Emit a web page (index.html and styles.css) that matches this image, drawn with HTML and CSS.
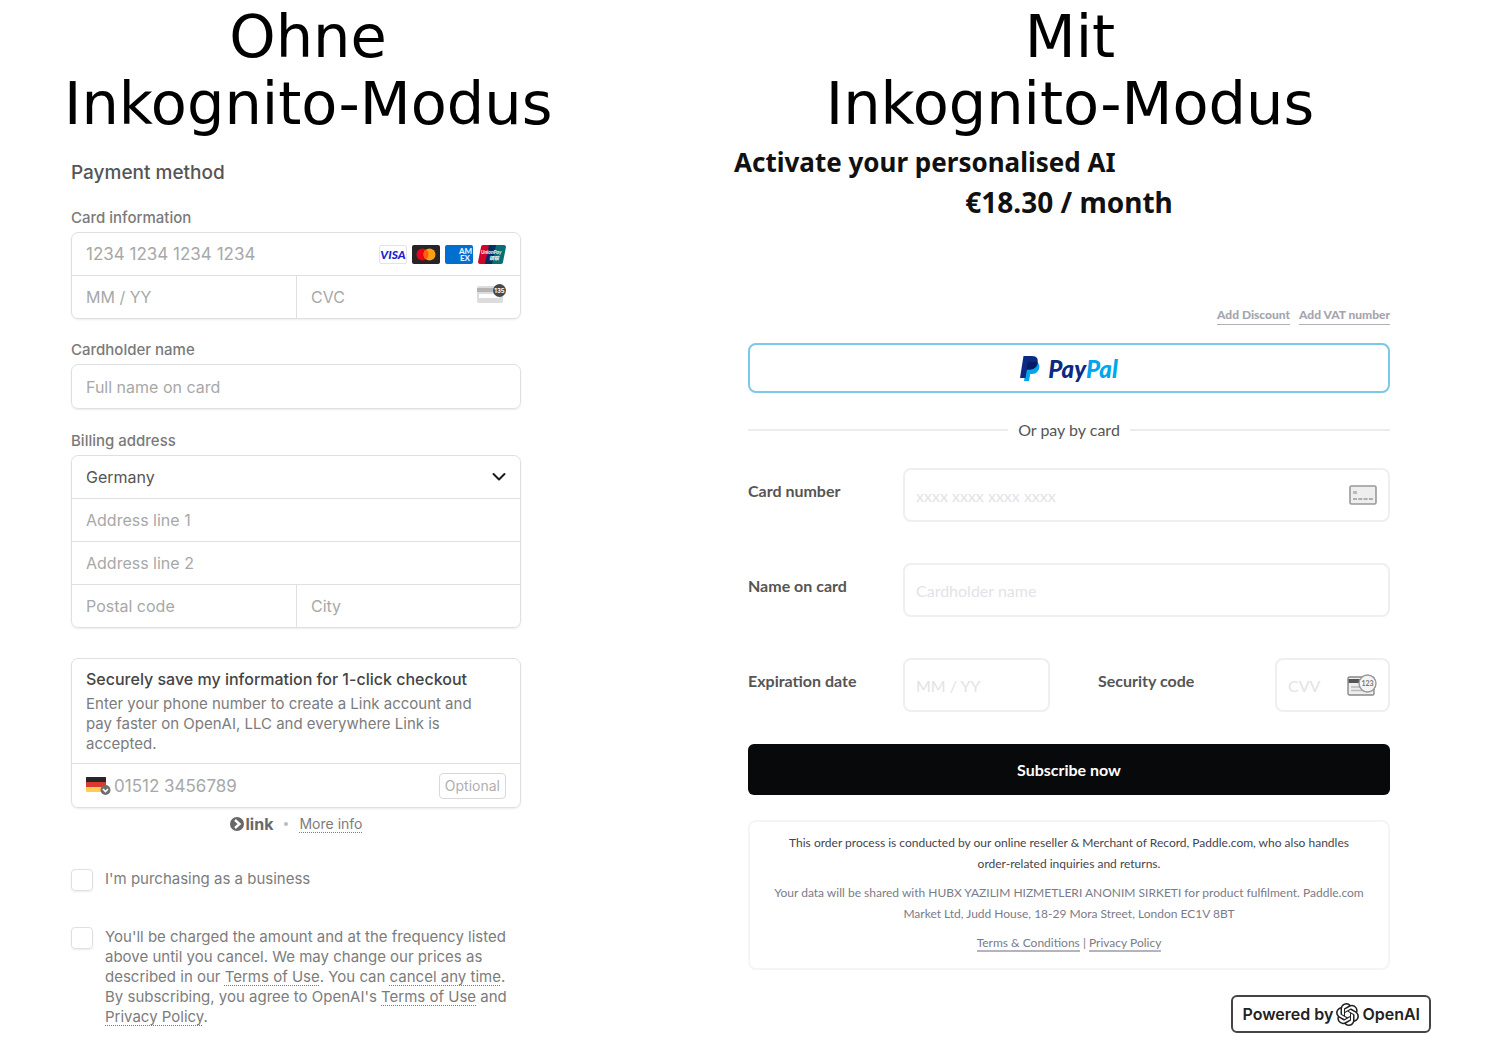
FILE: index.html
```html
<!DOCTYPE html>
<html lang="de">
<head>
    <meta charset="UTF-8">
    <meta name="viewport" content="width=device-width, initial-scale=1.0">
    <title>Ohne / Mit Inkognito-Modus</title>
    <link rel="stylesheet" href="styles.css">
</head>

<body>
    <main class="page">
        <section class="column">
            <h1>Ohne<br>Inkognito-Modus</h1>
            <form class="stripe" lang="en">
                <h2>Payment method</h2>

                <label class="field-label" for="card-number">Card information</label>
                <div class="group">
                    <div class="row">
                        <input type="text" class="number" id="card-number" placeholder="1234 1234 1234 1234">
                        <div class="brands">
                            <svg width="28" height="19" viewBox="0 0 28 19">
                                <rect x="0.5" y="0.5" width="27" height="18" rx="1.5" fill="#fff" stroke="#e4e4e8"/>
                                <text x="14" y="13.5" text-anchor="middle" class="visa">VISA</text>
                            </svg>
                            <svg width="28" height="19" viewBox="0 0 28 19">
                                <rect width="28" height="19" rx="2" fill="#252525"/>
                                <circle cx="10.5" cy="9.5" r="6" fill="#eb001b"/>
                                <circle cx="17.5" cy="9.5" r="6" fill="#f79e1b"/>
                                <path d="M14 4.6a6 6 0 0 1 0 9.8a6 6 0 0 1 0-9.8z" fill="#ff5f00"/>
                            </svg>
                            <svg width="28" height="19" viewBox="0 0 28 19">
                                <rect width="28" height="19" rx="2" fill="#016fd0"/>
                                <text x="14" y="9" class="amex">AM</text>
                                <text x="15" y="16" class="amex">EX</text>
                            </svg>
                            <svg width="28" height="19" viewBox="0 0 28 19">
                                <path d="M5 0h8L9 19H2a2 2 0 0 1-2-2L3 2a2 2 0 0 1 2-2z" fill="#d10429"/>
                                <path d="M11 0h9l-4 19H7z" fill="#022e64"/>
                                <path d="M18 0h8a2 2 0 0 1 2 2l-3 15a2 2 0 0 1-2 2h-9z" fill="#076f74"/>
                                <text x="3" y="9" class="union">UnionPay</text>
                                <text x="11" y="15" class="union">银联</text>
                            </svg>
                        </div>
                    </div>
                    <div class="row split">
                        <input type="text" aria-label="Expiry" placeholder="MM / YY">
                        <div class="cell">
                            <input type="text" aria-label="CVC" placeholder="CVC">
                            <svg class="cvc" width="30" height="22" viewBox="0 0 30 22">
                                <rect x="1" y="3" width="26" height="17" rx="2" fill="#dcdcdc"/>
                                <rect x="1" y="5" width="26" height="4" fill="#b4b4b4"/>
                                <rect x="3" y="11" width="20" height="4" fill="#fff"/>
                                <circle cx="23.5" cy="7.5" r="6.5" fill="#484848"/>
                                <text x="23.5" y="10" text-anchor="middle" class="digits">135</text>
                            </svg>
                        </div>
                    </div>
                </div>

                <label class="field-label" for="cardholder">Cardholder name</label>
                <div class="group single">
                    <div class="row">
                        <input type="text" id="cardholder" placeholder="Full name on card">
                    </div>
                </div>

                <label class="field-label" for="country">Billing address</label>
                <div class="group">
                    <div class="row">
                        <select id="country">
                            <option>Germany</option>
                        </select>
                        <svg width="14" height="10" viewBox="0 0 14 10">
                            <path d="M1.5 2l5.5 5.5L12.5 2" fill="none" stroke="#1a1a1a" stroke-width="2" stroke-linecap="round" stroke-linejoin="round"/>
                        </svg>
                    </div>
                    <div class="row">
                        <input type="text" aria-label="Address line 1" placeholder="Address line 1">
                    </div>
                    <div class="row">
                        <input type="text" aria-label="Address line 2" placeholder="Address line 2">
                    </div>
                    <div class="row split">
                        <input type="text" aria-label="Postal code" placeholder="Postal code">
                        <div class="cell">
                            <input type="text" aria-label="City" placeholder="City">
                        </div>
                    </div>
                </div>

                <div class="group link-box">
                    <div class="link-text">
                        <h3>Securely save my information for 1-click checkout</h3>
                        <p>Enter your phone number to create a Link account and pay faster on OpenAI, LLC and everywhere Link is accepted.</p>
                    </div>
                    <div class="row phone">
                        <svg width="25" height="19" viewBox="0 0 25 19">
                            <rect x="0" y="1" width="20" height="15" rx="1" fill="#fc5"/>
                            <rect x="0" y="1" width="20" height="10" fill="#d9392f"/>
                            <path d="M1 1h18a1 1 0 0 1 1 1v4H0V2a1 1 0 0 1 1-1z" fill="#262626"/>
                            <circle cx="19.5" cy="14" r="5" fill="#6f6f6f"/>
                            <path d="M17 13l2.5 2.5L22 13" fill="none" stroke="#fff" stroke-width="1.6"/>
                        </svg>
                        <input type="tel" class="number" aria-label="Phone number" placeholder="01512 3456789">
                        <span class="optional">Optional</span>
                    </div>
                </div>
                <div class="link-info">
                    <svg width="14" height="14" viewBox="0 0 14 14">
                        <circle cx="7" cy="7" r="7" fill="#686868"/>
                        <path d="M5 3l4.5 4L5 11" fill="none" stroke="#fff" stroke-width="2.4"/>
                    </svg>
                    <strong>link</strong>
                    <span class="dot"></span>
                    <a href="#">More info</a>
                </div>

                <div class="check">
                    <input type="checkbox" id="business">
                    <label for="business">I'm purchasing as a business</label>
                </div>
                <div class="check">
                    <input type="checkbox" id="agree">
                    <label for="agree">You'll be charged the amount and at the frequency listed above until you cancel. We may change our prices as described in our <a href="#">Terms of Use</a>. You can <a href="#">cancel any time</a>. By subscribing, you agree to OpenAI's <a href="#">Terms of Use</a> and <a href="#">Privacy Policy</a>.</label>
                </div>
            </form>
        </section>

        <section class="column right">
            <h1>Mit<br>Inkognito-Modus</h1>
            <div class="offer" lang="en">
                <h2>Activate your personalised AI</h2>
                <p>€18.30 / month</p>
            </div>
            <form class="paddle" lang="en">
                <div class="extras">
                    <a href="#">Add Discount</a>
                    <a href="#">Add VAT number</a>
                </div>
                <button type="button" class="paypal">
                    <svg width="20" height="25" viewBox="0 0 20 25">
                        <path d="M7 6h10c2.5 2 3 4.5 1.8 7.5c-1.3 3.2-3.8 4.5-7 4.5h-1.6L9 25H4z" fill="#00a6ee"/>
                        <path d="M3.5 0H12c5 0 6.5 3 5.5 7c-1.1 4.7-4.3 6.5-8.5 6.5H7L5.5 22H0z" fill="#0a2a84"/>
                        <path d="M8 6h9.6c.2 4.5-3 7.5-8.6 7.5H6.8z" fill="#071c62"/>
                    </svg>
                    <span><b>Pay</b><i>Pal</i></span>
                </button>
                <div class="divider">Or pay by card</div>

                <div class="line">
                    <label for="p-number">Card number</label>
                    <div class="box">
                        <input type="text" id="p-number" placeholder="xxxx xxxx xxxx xxxx">
                        <svg width="28" height="20" viewBox="0 0 28 20">
                            <rect x="1" y="1" width="26" height="18" rx="1.5" fill="#eee" stroke="#999" stroke-width="1.6"/>
                            <rect x="4" y="6" width="4" height="3" fill="#bbb"/>
                            <path d="M4 14h20" stroke="#999" stroke-width="1.6" stroke-dasharray="4 1.3"/>
                        </svg>
                    </div>
                </div>
                <div class="line">
                    <label for="p-name">Name on card</label>
                    <div class="box">
                        <input type="text" id="p-name" placeholder="Cardholder name">
                    </div>
                </div>
                <div class="line">
                    <label for="p-date">Expiration date</label>
                    <div class="box date">
                        <input type="text" id="p-date" placeholder="MM / YY">
                    </div>
                    <label class="code-label" for="p-code">Security code</label>
                    <div class="box code">
                        <input type="text" id="p-code" placeholder="CVV">
                        <svg width="30" height="24" viewBox="0 0 30 24">
                            <rect x="1" y="4" width="26" height="18" rx="1.5" fill="#eee" stroke="#888" stroke-width="1.4"/>
                            <rect x="1.5" y="6" width="25" height="4" fill="#555"/>
                            <path d="M4 14h12M4 17.5h20" stroke="#bbb" stroke-width="1.4"/>
                            <circle cx="20.5" cy="10.5" r="8.5" fill="#f4f4f4" stroke="#999" stroke-width="1.4"/>
                            <text x="20.5" y="13" text-anchor="middle" class="cvv-digits">123</text>
                        </svg>
                    </div>
                </div>

                <button type="submit" class="subscribe">Subscribe now</button>

                <div class="legal">
                    <p class="dark">This order process is conducted by our online reseller &amp; Merchant of Record, Paddle.com, who also handles order-related inquiries and returns.</p>
                    <p>Your data will be shared with HUBX YAZILIM HIZMETLERI ANONIM SIRKETI for product fulfilment. Paddle.com Market Ltd, Judd House, 18-29 Mora Street, London EC1V 8BT</p>
                    <p><a href="#">Terms &amp; Conditions</a> | <a href="#">Privacy Policy</a></p>
                </div>
            </form>
            <div class="powered" lang="en">
                Powered by
                <svg width="23" height="23" viewBox="0 0 24 24" fill="#222">
                    <path d="M22.2819 9.8211a5.9847 5.9847 0 0 0-.5157-4.9108 6.0462 6.0462 0 0 0-6.5098-2.9A6.0651 6.0651 0 0 0 4.9807 4.1818a5.9847 5.9847 0 0 0-3.9977 2.9 6.0462 6.0462 0 0 0 .7427 7.0966 5.98 5.98 0 0 0 .511 4.9107 6.051 6.051 0 0 0 6.5146 2.9001A5.9847 5.9847 0 0 0 13.2599 24a6.0557 6.0557 0 0 0 5.7718-4.2058 5.9894 5.9894 0 0 0 3.9977-2.9001 6.0557 6.0557 0 0 0-.7475-7.0729zm-9.022 12.6081a4.4755 4.4755 0 0 1-2.8764-1.0408l.1419-.0804 4.7783-2.7582a.7948.7948 0 0 0 .3927-.6813v-6.7369l2.02 1.1686a.071.071 0 0 1 .038.052v5.5826a4.504 4.504 0 0 1-4.4945 4.4944zm-9.6607-4.1254a4.4708 4.4708 0 0 1-.5346-3.0137l.142.0852 4.783 2.7582a.7712.7712 0 0 0 .7806 0l5.8428-3.3685v2.3324a.0804.0804 0 0 1-.0332.0615L9.74 19.9502a4.4992 4.4992 0 0 1-6.1408-1.6464zM2.3408 7.8956a4.485 4.485 0 0 1 2.3655-1.9728V11.6a.7664.7664 0 0 0 .3879.6765l5.8144 3.3543-2.0201 1.1685a.0757.0757 0 0 1-.071 0l-4.8303-2.7865A4.504 4.504 0 0 1 2.3408 7.872zm16.5963 3.8558L13.1038 8.364 15.1192 7.2a.0757.0757 0 0 1 .071 0l4.8303 2.7913a4.4944 4.4944 0 0 1-.6765 8.1042v-5.6772a.79.79 0 0 0-.407-.667zm2.0107-3.0231l-.142-.0852-4.7735-2.7818a.7759.7759 0 0 0-.7854 0L9.409 9.2297V6.8974a.0662.0662 0 0 1 .0284-.0615l4.8303-2.7866a4.4992 4.4992 0 0 1 6.6802 4.66zM8.3065 12.863l-2.02-1.1638a.0804.0804 0 0 1-.038-.0567V6.0742a4.4992 4.4992 0 0 1 7.3757-3.4537l-.142.0805L8.704 5.459a.7948.7948 0 0 0-.3927.6813zm1.0976-2.3654l2.602-1.4998 2.6069 1.4998v2.9994l-2.5974 1.4997-2.6067-1.4997Z"/>
                </svg>
                OpenAI
            </div>
        </section>
    </main>
</body>
</html>
```
FILE: styles.css
```css
* {
    box-sizing: border-box;
}

body {
    margin: 0;
    background-color: white;
    font-family: Inter, "Liberation Sans", sans-serif;
}

h1, h2, h3, p {
    margin: 0;
}

input, select, button {
    font-family: inherit;
}

svg {
    flex: none;
}

.page {
    display: grid;
    grid-template-columns: 488fr 697fr;
    gap: 182px;
    padding: 3px 66px 0 64px;
}

.column {
    min-width: 0;
}

.right {
    display: flex;
    flex-direction: column;
}

h1 {
    font-family: "DejaVu Sans", sans-serif;
    font-size: 59px;
    font-weight: 400;
    line-height: 67px;
    text-align: center;
    white-space: nowrap;
    color: black;
}

.right h1 {
    margin-right: 25px;
}

/* left form */
.stripe {
    padding: 24px 31px 0 7px;
    font-size: 15px;
    line-height: 20px;
    color: #7c7c7c;
}

.stripe h2 {
    font-size: 19px;
    font-weight: 500;
    line-height: 24px;
    color: #555;
    margin-bottom: 23px;
}

.field-label {
    display: block;
    margin-bottom: 4px;
    font-weight: 500;
    color: #7a7a7a;
}

.group {
    border: 1px solid #e0e0e0;
    border-radius: 7px;
    box-shadow: 0 1px 2px rgba(0, 0, 0, 0.08);
    margin-bottom: 21px;
}

.group.single {
    margin-bottom: 22px;
}

.row {
    display: flex;
    align-items: center;
    height: 42px;
    padding: 0 14px;
}

.row + .row {
    height: 43px;
    border-top: 1px solid #e0e0e0;
}

.row.split {
    display: grid;
    grid-template-columns: 1fr 1fr;
}

.single .row, .phone {
    height: 43px;
}

.row input, .row select {
    flex: 1;
    min-width: 0;
    height: 100%;
    padding: 0;
    border: none;
    outline: none;
    background: none;
    font-size: 16px;
    color: #555;
}

.row .number {
    font-size: 17px;
}

.row select {
    appearance: none;
}

.row input::placeholder {
    color: #a8a8a8;
    opacity: 1;
}

.cell {
    min-width: 0;
    display: flex;
    align-items: center;
    height: 100%;
    padding-left: 14px;
    border-left: 1px solid #e0e0e0;
}

.cvc {
    align-self: flex-start;
    margin-top: 7px;
}

.brands {
    display: flex;
    gap: 5px;
}

.visa {
    font: italic 900 12px Lato, sans-serif;
    fill: #1a1fd1;
}

.amex {
    font: 900 8px Lato, sans-serif;
    fill: #e4f1ff;
}

.union {
    font: italic 700 5px Lato, "Noto Sans CJK SC", sans-serif;
    fill: white;
}

.digits {
    font: 700 6px Inter, sans-serif;
    fill: white;
}

.link-box {
    margin-top: 30px;
    margin-bottom: 6px;
}

.link-text {
    padding: 10px 24px 9px 14px;
    border-bottom: 1px solid #e0e0e0;
}

.link-text h3 {
    font-size: 16px;
    font-weight: 500;
    line-height: 20px;
    color: #444;
    margin-bottom: 5px;
}

.phone input {
    margin-left: 3px;
}

.optional {
    padding: 2px 5px;
    border: 1px solid #d8d8d8;
    border-radius: 4px;
    font-size: 14px;
    color: #b0b0b0;
}

.link-info {
    display: flex;
    align-items: center;
    justify-content: center;
    margin-bottom: 35px;
    font-size: 14px;
}

.link-info strong {
    margin-left: 2px;
    font-size: 16px;
    color: #686868;
}

.dot {
    width: 4px;
    height: 4px;
    margin: 0 11px;
    border-radius: 2px;
    background-color: #bbb;
}

.stripe a {
    color: inherit;
    text-decoration: underline dotted 1px;
    text-underline-offset: 3px;
    text-decoration-skip-ink: none;
}

.check {
    display: flex;
    align-items: flex-start;
    gap: 12px;
    margin-bottom: 36px;
}

.check:last-child {
    margin-bottom: 0;
}

.check input {
    appearance: none;
    flex: none;
    width: 22px;
    height: 22px;
    margin: 0;
    border: 1px solid #e0e0e0;
    border-radius: 4px;
    box-shadow: 0 1px 2px rgba(0, 0, 0, 0.08);
}

/* right form */
.offer {
    margin: 5px 27px 0 0;
    font-family: "Noto Sans", sans-serif;
    font-size: 26px;
    font-weight: 700;
    line-height: 40px;
    color: #111;
}

.offer h2 {
    font-size: inherit;
}

.offer p {
    font-size: 28px;
    text-align: center;
}

.paddle {
    padding: 84px 41px 0 14px;
    font-family: Lato, sans-serif;
    font-size: 16px;
    line-height: 20px;
    color: #555;
}

.extras {
    display: flex;
    justify-content: flex-end;
    gap: 9px;
    margin-bottom: 18px;
    font-size: 12px;
    font-weight: 900;
    line-height: 18px;
}

.extras a {
    color: #a5a5ad;
    text-decoration: none;
    border-bottom: 1px solid #b0b0b8;
}

.paypal {
    display: flex;
    align-items: center;
    justify-content: center;
    gap: 8px;
    width: 100%;
    height: 50px;
    border: 2px solid #7cc8ea;
    border-radius: 8px;
    background-color: white;
    font-size: 24px;
    cursor: pointer;
}

.paypal b, .paypal i {
    font-weight: 900;
    font-style: italic;
    color: #0a2a84;
}

.paypal i {
    color: #00a6ee;
}

.divider {
    display: flex;
    align-items: center;
    gap: 10px;
    margin: 27px 0 28px;
}

.divider::before, .divider::after {
    content: "";
    flex: 1;
    height: 2px;
    background-color: #ececee;
}

.line {
    display: flex;
    margin-bottom: 41px;
}

.line label {
    width: 155px;
    margin-top: 13px;
    font-weight: 700;
}

.box {
    flex: 1;
    display: flex;
    align-items: center;
    height: 54px;
    padding: 0 11px;
    border: 2px solid #efeff3;
    border-radius: 8px;
}

.box input {
    flex: 1;
    min-width: 0;
    height: 100%;
    padding: 0;
    border: none;
    outline: none;
    background: none;
    font-size: 16px;
    color: #555;
}

.box input::placeholder {
    color: #e2e3e8;
    opacity: 1;
}

.box.date {
    flex: none;
    width: 147px;
}

.line .code-label {
    flex: 1;
    margin-left: 48px;
}

.box.code {
    flex: none;
    width: 115px;
}

.cvv-digits {
    font: 700 7px Lato, sans-serif;
    fill: #777;
}

.subscribe {
    display: block;
    width: 100%;
    height: 51px;
    margin-top: -9px;
    border: none;
    border-radius: 6px;
    background-color: #08090b;
    color: white;
    font-size: 16px;
    font-weight: 700;
    cursor: pointer;
}

.subscribe:hover {
    background-color: #333;
}

.legal {
    margin-top: 25px;
    padding: 10px 14px 15px;
    border: 2px solid #f5f5f7;
    border-radius: 8px;
    font-size: 12px;
    line-height: 21px;
    text-align: center;
    color: #7b7b88;
}

.legal p + p {
    margin-top: 8px;
}

.legal .dark {
    padding: 0 14px;
    color: #44444c;
}

.legal a {
    color: inherit;
    text-decoration: none;
    border-bottom: 2px solid #b4b4c0;
}

.powered {
    display: flex;
    align-items: center;
    align-self: flex-end;
    gap: 3px;
    height: 38px;
    margin-top: 25px;
    padding: 0 9px;
    border: 2px solid #444;
    border-radius: 6px;
    font-size: 16px;
    font-weight: 600;
    color: #222;
}
```
